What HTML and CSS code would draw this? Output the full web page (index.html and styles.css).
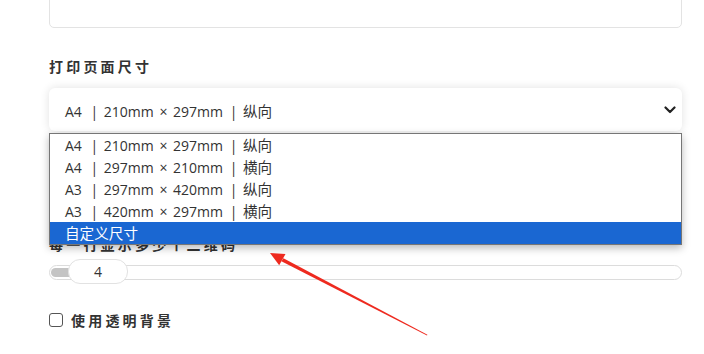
FILE: index.html
```html
<!DOCTYPE html>
<html lang="zh">
<head>
<meta charset="utf-8">
<link rel="stylesheet" href="styles.css">
</head>
<body>
<div class="page">
  <div class="textbox"></div>
  <div class="label size-label">打印页面尺寸</div>
  <div class="select-wrap">
    <div class="select">
      <span class="select-text"><span class="sz">A4</span> <span class="sep">|</span> 210mm <span class="x">×</span> 297mm <span class="sep">|</span> <span class="cjk">纵向</span></span>
      <svg class="chev" width="12" height="8" viewBox="0 0 12 8"><path d="M1.5 1.5 L6 6 L10.5 1.5" fill="none" stroke="#222" stroke-width="2.2" stroke-linecap="round" stroke-linejoin="round"/></svg>
    </div>
    <ul class="dropdown">
      <li><span class="sz">A4</span> <span class="sep">|</span> 210mm <span class="x">×</span> 297mm <span class="sep">|</span> <span class="cjk">纵向</span></li>
      <li><span class="sz">A4</span> <span class="sep">|</span> 297mm <span class="x">×</span> 210mm <span class="sep">|</span> <span class="cjk">横向</span></li>
      <li><span class="sz">A3</span> <span class="sep">|</span> 297mm <span class="x">×</span> 420mm <span class="sep">|</span> <span class="cjk">纵向</span></li>
      <li><span class="sz">A3</span> <span class="sep">|</span> 420mm <span class="x">×</span> 297mm <span class="sep">|</span> <span class="cjk">横向</span></li>
      <li class="active"><span class="cjk">自定义尺寸</span></li>
    </ul>
  </div>
  <div class="label per-row-label">每一行显示多少个二维码</div>
  <div class="slider">
    <div class="fill"></div>
    <div class="thumb">4</div>
  </div>
  <label class="check-row">
    <span class="checkbox"></span>
    <span class="label check-label">使用透明背景</span>
  </label>
  <svg class="arrow" width="704" height="354" viewBox="0 0 704 354">
    <polygon points="270,253 285.5,254 279.2,265.3" fill="#ee2a1f"/>
    <polygon points="283.4,258.2 281.4,261.2 427,335.4 427.4,334.8" fill="#ee2a1f"/>
  </svg>
</div>
</body>
</html>
```
FILE: styles.css
```css
html, body {
  margin: 0;
  padding: 0;
  background: #fff;
}
body {
  width: 704px;
  height: 354px;
  overflow: hidden;
  font-family: "Open Sans", "Noto Sans CJK SC", sans-serif;
  color: #333;
}
.page {
  position: relative;
  display: flow-root;
  padding: 0 22px 0 49px;
  height: 354px;
}
.textbox {
  margin-top: -40px;
  height: 66px;
  border: 1px solid #e3e3e3;
  border-radius: 5px;
}
.label {
  font-family: "Noto Sans CJK SC", sans-serif;
  font-weight: 700;
  font-size: 14px;
  letter-spacing: 3.2px;
  color: #333;
  line-height: 16px;
}
.size-label {
  margin-top: 30px;
}
.select-wrap {
  position: relative;
  margin-top: 14px;
}
.select {
  height: 43px;
  border-radius: 6px;
  background: #fff;
  box-shadow: 0 0 10px rgba(0,0,0,0.12);
  display: flex;
  align-items: center;
  justify-content: space-between;
  padding: 0 6px 0 16px;
}
.select-text, .dropdown li {
  font-size: 14px;
  color: #333;
  white-space: nowrap;
}
.select-text {
  padding-top: 1px;
}
.cjk {
  font-size: 14.6px;
}
.sz {
  margin-right: 2px;
}
.sep {
  margin: 0 2px 0 3px;
}
.x {
  margin: 0 2px;
}
.chev {
  display: block;
}
.dropdown {
  position: absolute;
  left: 0;
  top: 45px;
  width: 631px;
  margin: 0;
  padding: 0;
  list-style: none;
  border: 1px solid #767676;
  background: #fff;
  box-shadow: 0 3px 8px rgba(0,0,0,0.28);
  z-index: 2;
}
.dropdown li {
  height: 22px;
  line-height: 22px;
  padding-left: 15px;
}
.dropdown li.active {
  background: #1a67d2;
  color: #fff;
}
.per-row-label {
  margin-top: 105px;
}
.slider {
  position: relative;
  margin-top: 13px;
  height: 13px;
  border: 1px solid #dcdcdc;
  border-radius: 8px;
  background: #fff;
}
.fill {
  position: absolute;
  left: 1px;
  top: 2px;
  width: 22px;
  height: 9px;
  border-radius: 5px;
  background: #c4c4c4;
}
.thumb {
  position: absolute;
  left: 18px;
  top: -7px;
  width: 58px;
  height: 23px;
  border: 1px solid #e2e2e2;
  border-radius: 12px;
  background: #fff;
  text-align: center;
  line-height: 23px;
  font-size: 14px;
  color: #333;
}
.check-row {
  display: flex;
  align-items: center;
  gap: 8px;
  margin-top: 32px;
}
.checkbox {
  width: 12px;
  height: 12px;
  border: 1.5px solid #555;
  border-radius: 3px;
  background: #fff;
}
.arrow {
  position: absolute;
  left: 0;
  top: 0;
  z-index: 3;
  pointer-events: none;
}
```
